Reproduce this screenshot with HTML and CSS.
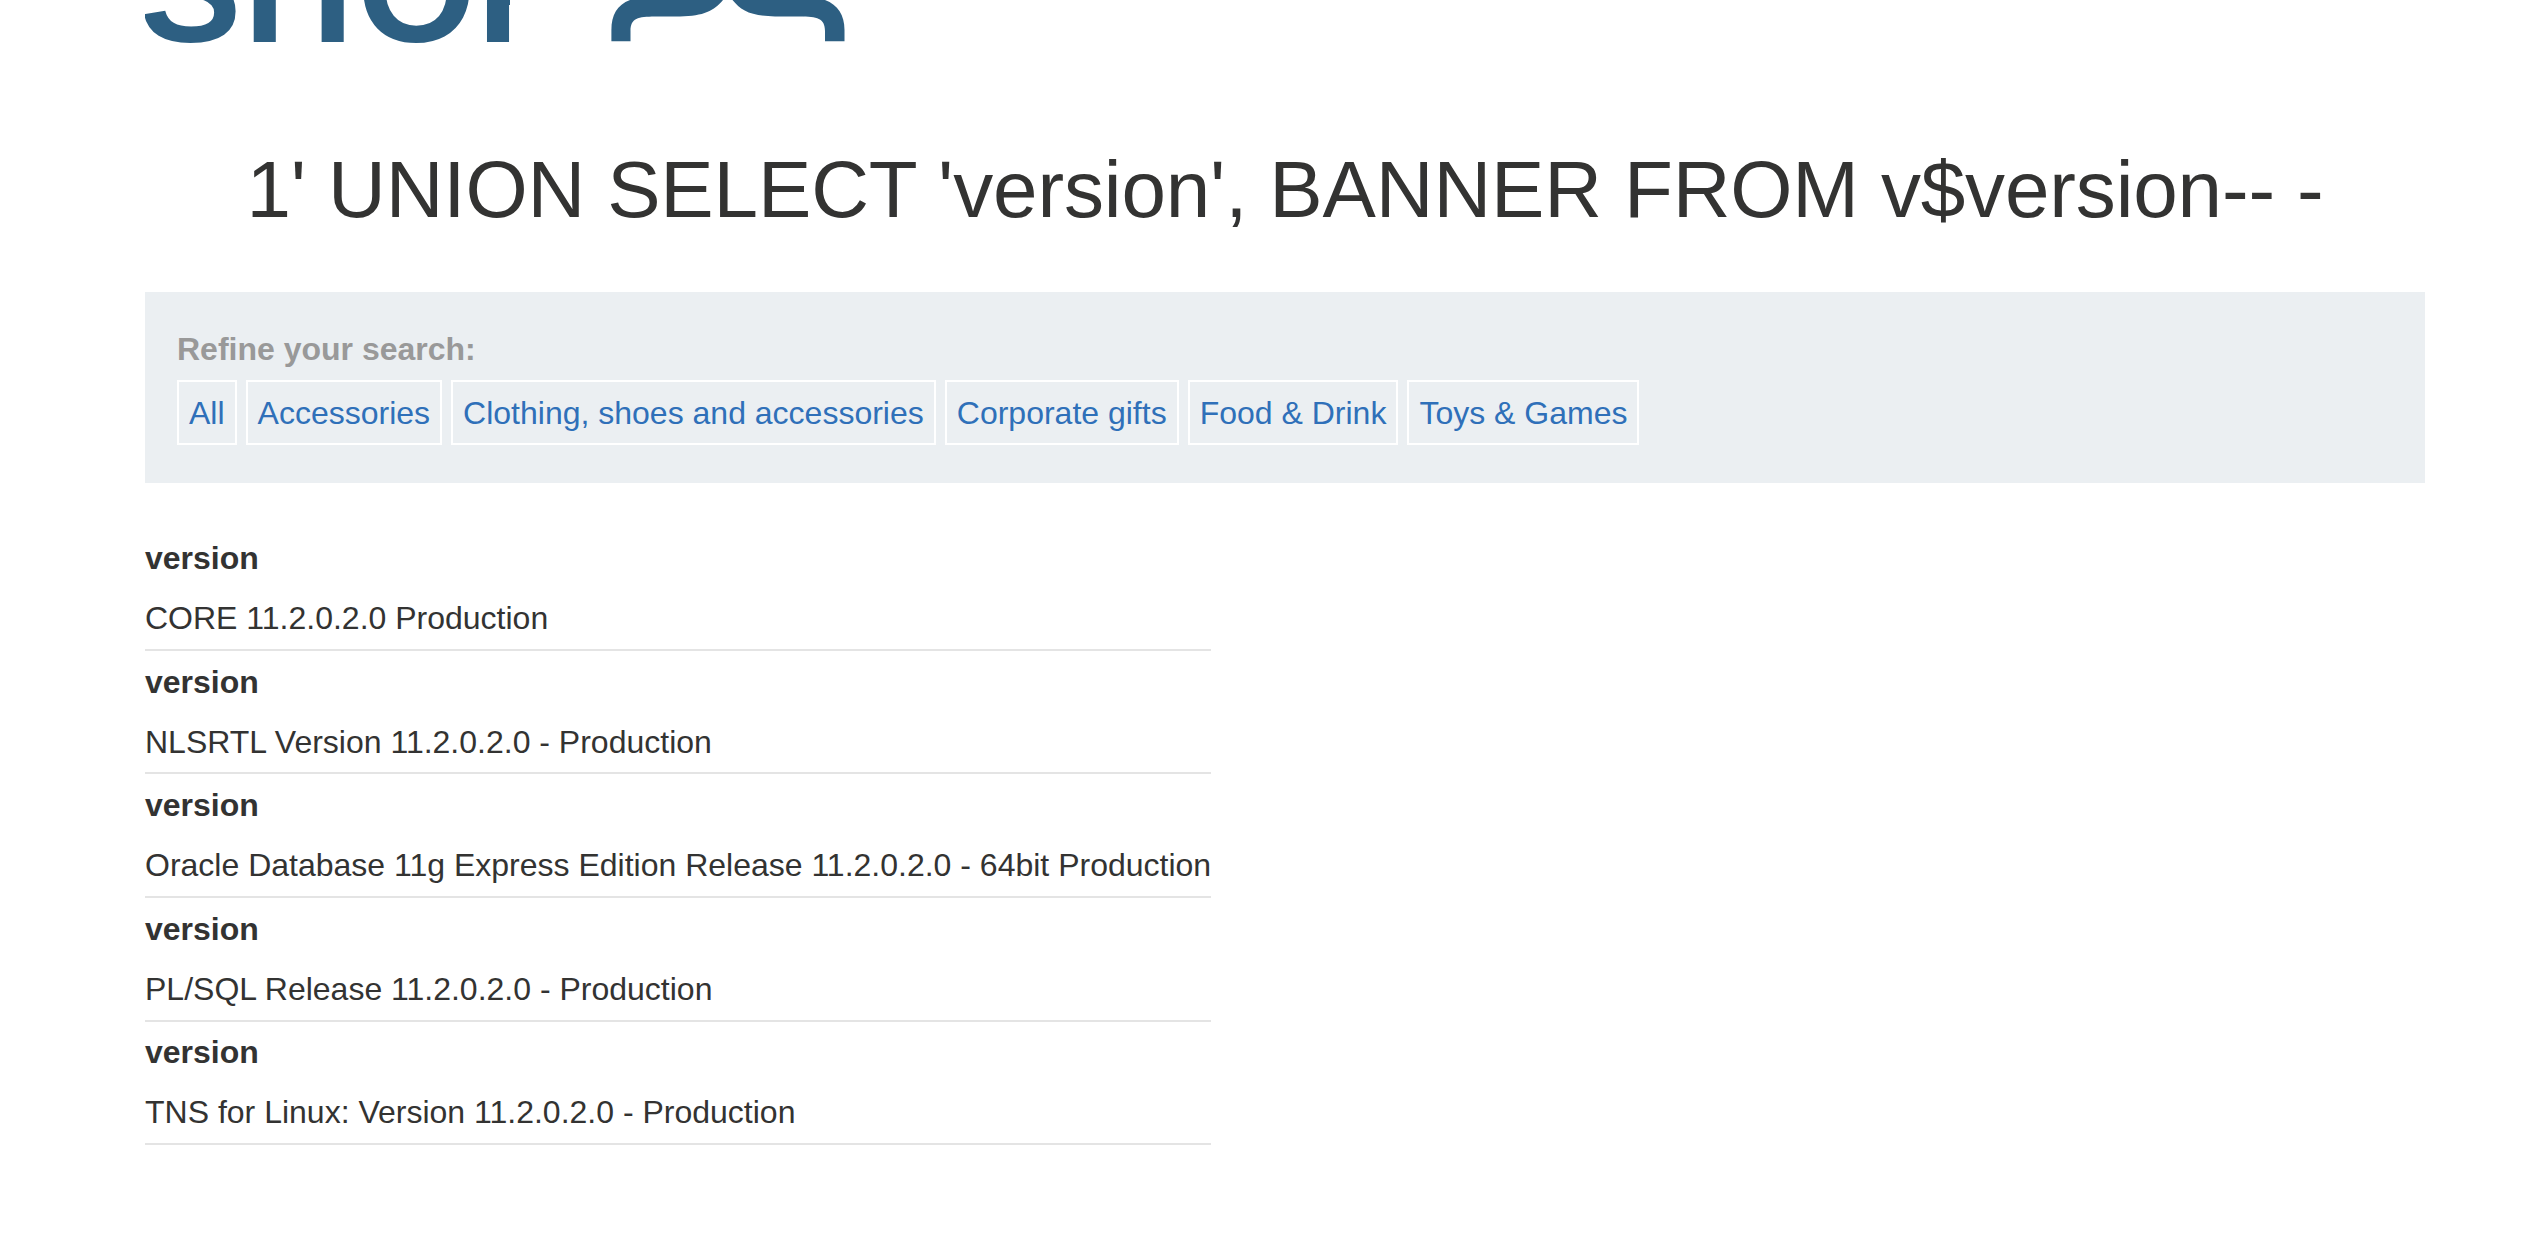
FILE: index.html
```
<!DOCTYPE html>
<html lang="en">
<head>
<meta charset="utf-8">
<title>Shop</title>
<link rel="stylesheet" href="styles.css">
</head>
<body>
<div class="container">
  <header class="logo">
    <svg class="logo-art" width="720" height="60" viewBox="145 0 720 60" role="img" aria-label="Shop">
      <clipPath id="wordmark"><path d="M130 0H510V60H130Z"/></clipPath>
      <text class="logo-text" clip-path="url(#wordmark)" y="42" x="139.500 243.500 357 476.700">SHOP</text>
      <path class="logo-mark" d="M611.4 41.3V30C611.4 15 617 5 630 0H723C714 10.500 704 16.200 680 16.400H655C638 16.600 630.500 18 630.500 31V41.300Z"/>
      <path class="logo-mark" d="M844.500 41.300V30C844.500 15 838 5 825 0H732.500C741 10.500 751 16.200 775 16.400H800C817 16.600 825 18 825 31V41.300Z"/>
    </svg>
  </header>
  <h1 class="title">1' UNION SELECT 'version', BANNER FROM v$version-- -</h1>
  <section class="filters">
    <label class="filters-label">Refine your search:</label>
    <nav class="filter-list">
      <a class="filter">All</a>
      <a class="filter">Accessories</a>
      <a class="filter">Clothing, shoes and accessories</a>
      <a class="filter">Corporate gifts</a>
      <a class="filter">Food &amp; Drink</a>
      <a class="filter">Toys &amp; Games</a>
    </nav>
  </section>
  <table class="results">
    <tbody>
      <tr><th>version</th></tr>
      <tr><td>CORE 11.2.0.2.0 Production</td></tr>
      <tr><th>version</th></tr>
      <tr><td>NLSRTL Version 11.2.0.2.0 - Production</td></tr>
      <tr><th>version</th></tr>
      <tr><td>Oracle Database 11g Express Edition Release 11.2.0.2.0 - 64bit Production</td></tr>
      <tr><th>version</th></tr>
      <tr><td>PL/SQL Release 11.2.0.2.0 - Production</td></tr>
      <tr><th>version</th></tr>
      <tr><td>TNS for Linux: Version 11.2.0.2.0 - Production</td></tr>
    </tbody>
  </table>
</div>
</body>
</html>
```
FILE: styles.css
```
body {
  margin: 0;
  background: #fff;
  color: #333332;
  font-family: "Liberation Sans", Arial, sans-serif;
  font-size: 32px;
}
.container {
  width: 2280px;
  margin-left: 145px;
}
.logo {
  height: 60px;
}
.logo-art {
  display: block;
}
.logo-text {
  font-size: 153px;
  font-weight: 700;
  fill: #2d5f82;
}
.logo-mark {
  fill: #2d5f82;
}
.title {
  margin: 80px 0 53px;
  font-size: 80px;
  font-weight: 400;
  letter-spacing: -0.150px;
  line-height: 99px;
  text-align: center;
  white-space: nowrap;
}
.filters {
  box-sizing: border-box;
  height: 191px;
  padding: 38px 32px 0;
  background: #ebeff2;
}
.filters-label {
  display: block;
  color: #999;
  font-weight: 700;
  line-height: 38px;
}
.filter-list {
  display: flex;
  gap: 9px;
  margin-top: 12px;
}
.filter {
  box-sizing: border-box;
  height: 65px;
  padding: 0 10px;
  border: 2px solid #fff;
  color: #2f70b9;
  line-height: 62px;
  white-space: nowrap;
}
.results {
  margin-top: 44.200px;
  border-spacing: 0;
}
.results th,
.results td {
  padding: 0;
  text-align: left;
  white-space: nowrap;
}
.results th {
  height: 58.400px;
  padding-top: 1.600px;
  line-height: 38px;
}
.results td {
  height: 61.600px;
  border-bottom: 2px solid #e4e4e4;
  line-height: 38px;
}
```
